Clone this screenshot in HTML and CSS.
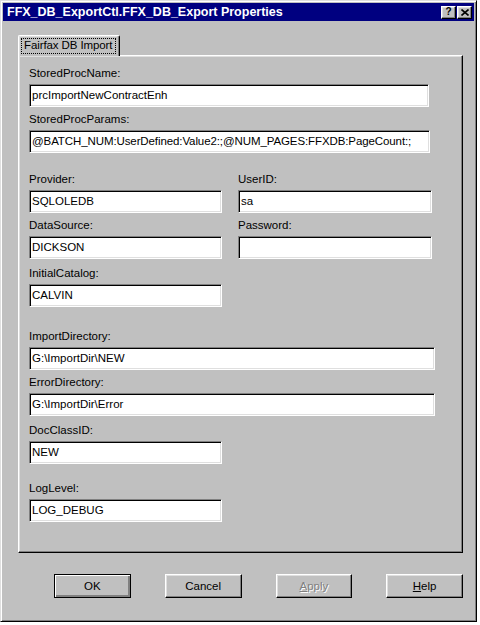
FILE: index.html
```html
<!DOCTYPE html>
<html>
<head>
<meta charset="utf-8">
<link rel="stylesheet" href="styles.css">
</head>
<body>
<div class="window">
  <div class="titlebar">
    <span class="title">FFX_DB_ExportCtl.FFX_DB_Export Properties</span>
    <div class="tb-btns">
      <span class="tb-btn help-glyph">?</span>
      <span class="tb-btn"><svg width="8" height="7" viewBox="0 0 8 7"><path d="M0.5 0.5 L7.5 6.5 M7.5 0.5 L0.5 6.5" stroke="#000" stroke-width="1.6" fill="none"/></svg></span>
    </div>
  </div>
  <div class="body">
    <div class="tabs">
      <div class="tab"><span class="tab-label">Fairfax DB Import</span></div>
    </div>
    <div class="panel">
      <div class="field">
        <div class="label">StoredProcName:</div>
        <div class="input w-name">prcImportNewContractEnh</div>
      </div>
      <div class="field mt-6">
        <div class="label">StoredProcParams:</div>
        <div class="input w-params">@BATCH_NUM:UserDefined:Value2:;@NUM_PAGES:FFXDB:PageCount:;</div>
      </div>
      <div class="grid mt-20">
        <div class="field">
          <div class="label">Provider:</div>
          <div class="input">SQLOLEDB</div>
        </div>
        <div class="field">
          <div class="label">UserID:</div>
          <div class="input">sa</div>
        </div>
        <div class="field">
          <div class="label">DataSource:</div>
          <div class="input">DICKSON</div>
        </div>
        <div class="field">
          <div class="label">Password:</div>
          <div class="input"></div>
        </div>
      </div>
      <div class="field mt-8">
        <div class="label">InitialCatalog:</div>
        <div class="input w-short">CALVIN</div>
      </div>
      <div class="field mt-23">
        <div class="label">ImportDirectory:</div>
        <div class="input w-dir">G:\ImportDir\NEW</div>
      </div>
      <div class="field mt-6">
        <div class="label">ErrorDirectory:</div>
        <div class="input w-dir">G:\ImportDir\Error</div>
      </div>
      <div class="field mt-8">
        <div class="label">DocClassID:</div>
        <div class="input w-short">NEW</div>
      </div>
      <div class="field mt-18">
        <div class="label">LogLevel:</div>
        <div class="input w-short">LOG_DEBUG</div>
      </div>
    </div>
    <div class="buttons">
      <div class="btn btn-default">OK</div>
      <div class="btn">Cancel</div>
      <div class="btn btn-disabled"><span class="u">A</span>pply</div>
      <div class="btn"><span class="u">H</span>elp</div>
    </div>
  </div>
</div>
</body>
</html>
```

FILE: styles.css
```css
body {
  margin: 0;
  background: #fff;
  font-family: "Liberation Sans", Arial, sans-serif;
  font-size: 11.5px;
  color: #000;
}

.window {
  width: 477px;
  height: 622px;
  box-sizing: border-box;
  background: #c0c0c0;
  border: 1px solid;
  border-color: #dfdfdf #000 #000 #dfdfdf;
  box-shadow: inset 1px 1px #fff, inset -1px -1px #808080;
  padding: 2px;
}

.titlebar {
  height: 18px;
  background: #000080;
  color: #fff;
  display: flex;
  align-items: center;
  justify-content: space-between;
  padding: 0 2px 0 4px;
}

.title {
  font-weight: bold;
  font-size: 12.5px;
  white-space: nowrap;
}

.tb-btns {
  display: flex;
  gap: 1px;
}

.tb-btn {
  width: 15px;
  height: 13px;
  box-sizing: border-box;
  background: #c0c0c0;
  border: 1px solid;
  border-color: #fff #000 #000 #fff;
  box-shadow: inset -1px -1px #808080, inset 1px 1px #dfdfdf;
  display: flex;
  align-items: center;
  justify-content: center;
  color: #000;
}

.help-glyph {
  font-weight: bold;
  font-size: 10px;
  line-height: 10px;
}

.body {
  padding: 14px 11px 0 15px;
}

.tabs {
  display: flex;
}

.tab {
  position: relative;
  z-index: 1;
  width: 102px;
  height: 21px;
  box-sizing: border-box;
  background: #c0c0c0;
  border-top: 1px solid #fff;
  border-left: 1px solid #fff;
  border-right: 1px solid #000;
  border-radius: 2px 2px 0 0;
  box-shadow: inset -1px 0 #808080, inset 1px 1px #dfdfdf;
  margin-bottom: -1px;
  padding: 2px 3px 2px 2px;
  display: flex;
}

.tab-label {
  flex: 1;
  border: 1px dotted #000;
  line-height: 13px;
  padding-left: 2px;
  white-space: nowrap;
  letter-spacing: -0.1px;
}

.panel {
  height: 498px;
  box-sizing: border-box;
  border: 1px solid;
  border-color: #fff #000 #000 #fff;
  box-shadow: inset -1px -1px #808080, inset 1px 1px #dfdfdf;
  padding: 11px 10px 0 10px;
}

.field {
  display: flex;
  flex-direction: column;
  align-items: flex-start;
}

.label {
  height: 13px;
  line-height: 13px;
  margin-bottom: 4px;
  white-space: nowrap;
}

.input {
  width: 193px;
  height: 23px;
  box-sizing: border-box;
  background: #fff;
  border: 1px solid;
  border-color: #808080 #fff #fff #808080;
  box-shadow: inset 1px 1px #000, inset -1px -1px #dfdfdf;
  padding: 0 2px;
  line-height: 21px;
  white-space: nowrap;
  overflow: hidden;
}

.w-params {
  letter-spacing: -0.1px;
}

.grid .input {
  width: 100%;
}

.w-name { width: 400px; }
.w-params { width: 401px; }
.w-dir { width: 406px; }
.w-short { width: 193px; }

.grid {
  display: grid;
  grid-template-columns: 193px 194px;
  column-gap: 16px;
  row-gap: 6px;
}

.mt-6 { margin-top: 6px; }
.mt-8 { margin-top: 8px; }
.mt-18 { margin-top: 18px; }
.mt-20 { margin-top: 20px; }
.mt-23 { margin-top: 23px; }

.buttons {
  display: flex;
  gap: 34px;
  margin-top: 21px;
  padding-left: 36px;
}

.btn {
  width: 77px;
  height: 24px;
  box-sizing: border-box;
  background: #c0c0c0;
  border: 1px solid;
  border-color: #fff #000 #000 #fff;
  box-shadow: inset -1px -1px #808080, inset 1px 1px #dfdfdf;
  display: flex;
  align-items: center;
  justify-content: center;
}

.btn-default {
  border-color: #000;
  box-shadow: inset 1px 1px #fff, inset -1px -1px #808080, inset -2px -2px #808080;
}

.btn-disabled {
  color: #808080;
  text-shadow: 1px 1px #fff;
}

.u {
  text-decoration: underline;
}
```
